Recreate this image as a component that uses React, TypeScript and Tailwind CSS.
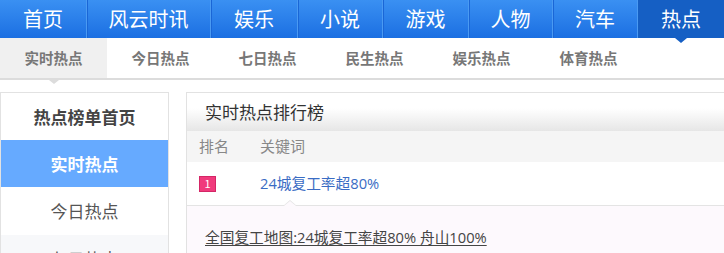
import React from "react";

const mainNav = [
  { t: "首页", w: "w-[87px]" },
  { t: "风云时讯", w: "w-[124px]" },
  { t: "娱乐", w: "w-[87px]" },
  { t: "小说", w: "w-[85px]" },
  { t: "游戏", w: "w-[86px]" },
  { t: "人物", w: "w-[84px]" },
  { t: "汽车", w: "w-[85px]" },
  { t: "热点", w: "flex-1" },
];
const subNav = ["实时热点", "今日热点", "七日热点", "民生热点", "娱乐热点", "体育热点"];

export default function App() {
  return (
    <div
      className="w-[724px] h-[253px] overflow-hidden bg-white"
      style={{ fontFamily: '"Microsoft YaHei", "Noto Sans CJK SC", sans-serif' }}
    >
      {/* main nav */}
      <div className="flex h-[38px] bg-gradient-to-b from-[#3a90f2] to-[#1b6fe2]">
        {mainNav.map((n, i) => {
          const active = i === mainNav.length - 1;
          return (
            <div
              key={n.t}
              className={
                active
                  ? `relative flex items-center justify-center ${n.w} text-[20px] text-white bg-[#155fc4]`
                  : `relative flex items-center justify-center ${n.w} text-[20px] text-white border-r border-[#4a9af2] shadow-[1px_0_0_#1a66d6]`
              }
            >
              {n.t}
              {active && (
                <span className="absolute left-1/2 -translate-x-1/2 top-full w-0 h-0 border-x-[6px] border-x-transparent border-t-[5px] border-t-[#155fc4]" />
              )}
            </div>
          );
        })}
      </div>

      {/* sub nav */}
      <div className="flex h-[42px] border-b-2 border-[#dcdcdc]">
        {subNav.map((n, i) => (
          <div
            key={n}
            className={
              i === 0
                ? "relative w-[107px] flex items-center justify-center text-[14.5px] font-bold text-[#777] bg-[#f0f0f0]"
                : "w-[107px] flex items-center justify-center text-[14.5px] font-bold text-[#777]"
            }
          >
            {n}
            {i === 0 && (
              <span className="absolute left-1/2 -translate-x-1/2 top-[calc(100%+2px)] w-0 h-0 border-x-[5px] border-x-transparent border-t-[4px] border-t-[#dcdcdc]" />
            )}
          </div>
        ))}
      </div>

      {/* content */}
      <div className="flex gap-[17px] pt-[12px]">
        {/* sidebar */}
        <div className="w-[169px] shrink-0 border border-[#e2e2e2] border-b-0">
          <div className="h-[47px] flex items-center justify-center text-[17px] font-bold text-[#444]">
            热点榜单首页
          </div>
          <div className="h-[47px] flex items-center justify-center text-[17px] font-bold text-white bg-[#66aaff]">
            实时热点
          </div>
          <div className="h-[48px] flex items-center justify-center text-[17px] text-[#555]">
            今日热点
          </div>
          <div className="h-[47px] flex items-center justify-center text-[17px] text-[#555] bg-[#f7f8fa]">
            七日热点
          </div>
        </div>

        {/* ranking panel */}
        <div className="flex-1 border-l border-t border-[#e2e2e2]">
          <div className="h-[38px] flex items-center pl-[18px] text-[17px] text-[#333] bg-gradient-to-b from-white from-40% to-[#e6e6e6]">
            实时热点排行榜
          </div>
          <div className="h-[31px] flex items-center bg-[#f5f5f5] text-[15px] text-[#888]">
            <span className="w-[73px] pl-[12px]">排名</span>
            <span>关键词</span>
          </div>
          <div className="relative h-[44px] flex items-center border-b border-[#e4e4e4]">
            <span className="w-[73px] pl-[12px] flex">
              <span className="w-[17px] h-[16px] flex items-center justify-center bg-[#f03a7c] border border-[#d42666] text-white text-[11px] leading-none">
                1
              </span>
            </span>
            <span className="text-[14.7px] text-[#3a6cc4]" style={{ fontFamily: '"Open Sans", "Noto Sans CJK SC", sans-serif' }}>
              24城复工率超80%
            </span>
            <span className="absolute left-[96px] -bottom-px w-0 h-0 border-x-[7px] border-x-transparent border-b-[6px] border-b-[#e4e4e4]" />
            <span className="absolute left-[97px] -bottom-px w-0 h-0 border-x-[6px] border-x-transparent border-b-[5px] border-b-[#fdf9fd]" />
          </div>
          <div className="h-[60px] bg-[#fdf9fd] pl-[18px] pt-[18px]">
            <span className="text-[14.7px] text-[#444] underline underline-offset-2" style={{ fontFamily: '"Open Sans", "Noto Sans CJK SC", sans-serif' }}>
              全国复工地图:24城复工率超80% 舟山100%
            </span>
          </div>
        </div>
      </div>
    </div>
  );
}
